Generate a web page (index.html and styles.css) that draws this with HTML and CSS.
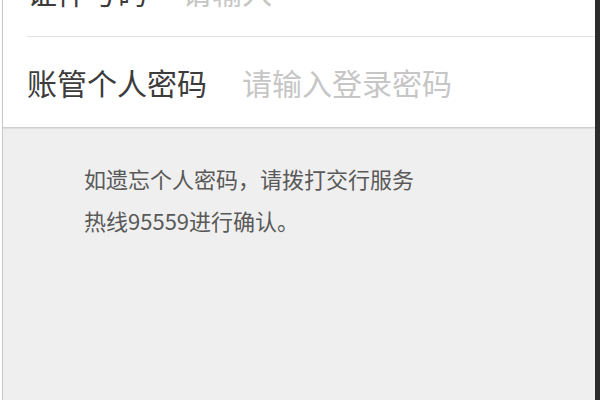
FILE: index.html
```html
<!DOCTYPE html>
<html lang="zh-CN">
<head>
<meta charset="utf-8">
<title>账管个人密码</title>
<link rel="stylesheet" href="styles.css">
</head>
<body>
<div class="screen">
  <div class="edge-left"></div>
  <main class="content">
    <section class="form">
      <div class="row row-first">
        <span class="label">证件号码</span>
        <span class="placeholder">请输入</span>
      </div>
      <div class="row">
        <span class="label">账管个人密码</span>
        <span class="placeholder">请输入登录密码</span>
      </div>
    </section>
    <p class="hint">如遗忘个人密码，请拨打交行服务<br>热线95559进行确认。</p>
  </main>
  <div class="edge-right"></div>
</div>
</body>
</html>
```

FILE: styles.css
```css
html, body {
  margin: 0;
  padding: 0;
  width: 600px;
  height: 400px;
  overflow: hidden;
  background: #efefef;
  font-family: "Noto Sans CJK SC", "Noto Sans", sans-serif;
}

.screen {
  display: flex;
  width: 600px;
  height: 400px;
}

.edge-left {
  width: 2px;
  background: #ffffff;
  border-right: 1px solid #c9c9c9;
}

.edge-right {
  width: 5px;
  background: #2c2c2c;
}

.content {
  flex: 1;
  display: flex;
  flex-direction: column;
  background: #efefef;
}

.form {
  background: #ffffff;
  margin-top: -54px;
  border-bottom: 1px solid #cfcfcf;
  box-shadow: 0 1px 1px rgba(0, 0, 0, 0.06);
}

.row {
  display: flex;
  align-items: center;
  gap: 35px;
  height: 90px;
  margin-left: 24px;
  font-size: 30px;
  line-height: 1;
}

.row-first {
  border-bottom: 1px solid #e1e1e1;
}

.label {
  color: #3c3c3c;
}

.placeholder {
  color: #c6c6c6;
}

.hint {
  margin: 0;
  padding: 29px 0 0 81px;
  font-size: 22px;
  line-height: 42px;
  color: #595959;
}
```
